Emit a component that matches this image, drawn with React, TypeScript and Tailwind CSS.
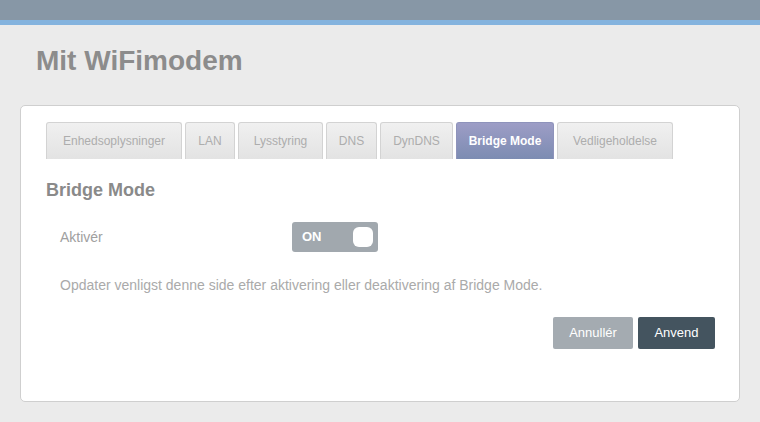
import { useState } from 'react'

const tabs = [
  { label: 'Enhedsoplysninger', w: 'w-[136px]' },
  { label: 'LAN', w: 'w-[50px]' },
  { label: 'Lysstyring', w: 'w-[85px]' },
  { label: 'DNS', w: 'w-[51px]' },
  { label: 'DynDNS', w: 'w-[73px]' },
  { label: 'Bridge Mode', w: 'w-[98px]' },
  { label: 'Vedligeholdelse', w: 'w-[116px]' },
]

export default function App() {
  const [active, setActive] = useState('Bridge Mode')
  const [on, setOn] = useState(true)

  return (
    <div className="h-[422px] w-[760px] overflow-hidden bg-[#ebebeb] font-['Liberation_Sans',Arial,sans-serif]">
      {/* top bar */}
      <div className="h-[20px] bg-[#8797a6]" />
      <div className="h-[5px] bg-[#84b3de]" />

      <h1 className="pl-[36px] pt-[20px] text-[28px] leading-[32px] font-bold text-[#8c8c8c]">Mit WiFimodem</h1>

      <div className="mx-[20px] mt-[28px] h-[297px] rounded-[5px] border border-[#cfcfcf] bg-white pl-[25px] pr-[24px] pt-[16px]">
        {/* tabs */}
        <div className="flex gap-[3px]">
          {tabs.map((t) => {
            const isActive = t.label === active
            return (
              <button
                key={t.label}
                onClick={() => setActive(t.label)}
                className={
                  isActive
                    ? `${t.w} h-[37px] shrink-0 whitespace-nowrap rounded-t-[3px] border border-b-0 border-[#8e93bb] bg-gradient-to-b from-[#9d9dc6] to-[#7c8cb2] text-[12px] font-bold text-white`
                    : `${t.w} h-[37px] shrink-0 whitespace-nowrap rounded-t-[3px] border border-b-0 border-[#d3d3d3] bg-gradient-to-b from-[#f0f0f0] to-[#e3e3e3] text-[12px] text-[#adadad]`
                }
              >
                {t.label}
              </button>
            )
          })}
        </div>

        <h2 className="mt-[21px] text-[18px] leading-[20px] font-bold text-[#8a8a8a]">Bridge Mode</h2>

        <div className="mt-[22px] flex items-center pl-[14px]">
          <span className="w-[232px] text-[14px] text-[#a0a0a0]">Aktivér</span>
          <button
            onClick={() => setOn(!on)}
            className="flex h-[30px] w-[86px] items-center justify-between rounded-[3px] bg-[#a1a8ae] pl-[10px] pr-[5px]"
          >
            <span className="text-[13px] font-bold text-white">{on ? 'ON' : 'OFF'}</span>
            <span className="h-[20px] w-[20px] rounded-[6px] bg-white" />
          </button>
        </div>

        <p className="mt-[23px] pl-[14px] text-[14px] leading-[20px] text-[#aaaaaa]">
          Opdater venligst denne side efter aktivering eller deaktivering af Bridge Mode.
        </p>

        <div className="mt-[22px] flex justify-end gap-[5px]">
          <button className="h-[32px] w-[80px] rounded-[2px] bg-[#a4abb1] text-[13px] text-white">Annullér</button>
          <button className="h-[32px] w-[77px] rounded-[2px] bg-[#44545f] text-[13px] text-white">Anvend</button>
        </div>
      </div>
    </div>
  )
}
